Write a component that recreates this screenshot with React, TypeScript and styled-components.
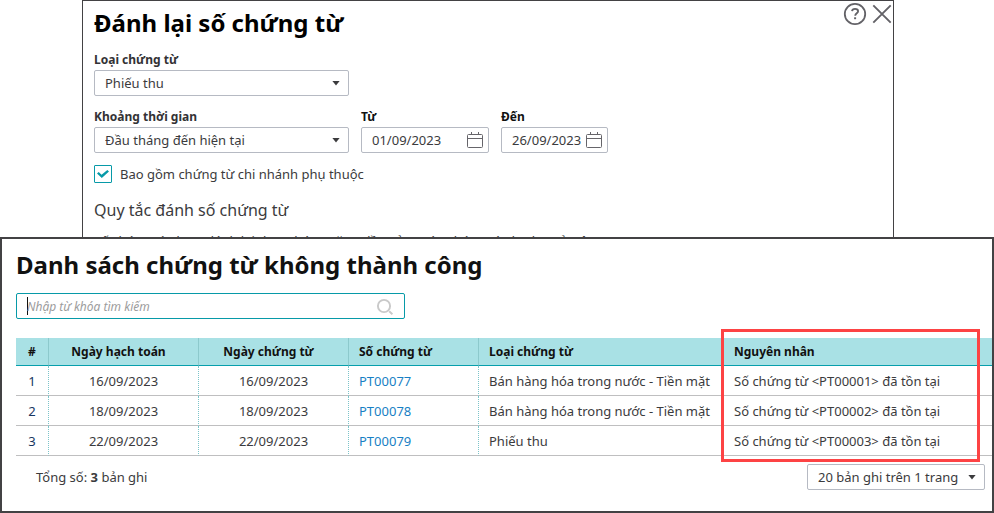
import React, { useState } from "react";
import styled, { createGlobalStyle } from "styled-components";

const GlobalStyle = createGlobalStyle`
  *, *::before, *::after { box-sizing: border-box; }
  body { margin: 0; background: #fff; }
  body, button, input, select {
    font-family: "Noto Sans", sans-serif;
    font-size: 13px;
    line-height: 18px;
    color: #3b3b3d;
  }
`;

const Page = styled.main`
  display: flex;
  flex-direction: column;
`;

const SettingsDialog = styled.section`
  position: relative;
  max-height: 237px;
  margin: 0 100px 0 82px;
  padding: 4px 11px 0;
  overflow: hidden;
  border: 1px solid #434244;
  border-bottom: 0;
`;

const ResultDialog = styled.section`
  display: flex;
  flex-direction: column;
  min-height: 276px;
  padding: 8px 0 21px 14px;
  border: 2px solid #434244;
`;

const DialogHeader = styled.header`
  display: flex;
  justify-content: space-between;
  align-items: flex-start;
`;

const Title = styled.h1<{ $tone?: string }>`
  margin: 0;
  font-size: 24px;
  line-height: 36px;
  font-weight: 700;
  color: ${(p) => p.$tone || "#000"};
`;

const Tools = styled.div`
  display: flex;
  gap: 3px;
  margin: -4px -12px 0 0;
`;

const IconButton = styled.button`
  display: flex;
  padding: 1px 0;
  border: 0;
  background: none;
  color: #636267;
`;

const FieldRow = styled.div`
  display: flex;
  gap: 12px;
  margin-top: 10px;
  & + & { margin-top: 12px; }
`;

const Field = styled.div<{ $width: number }>`
  display: flex;
  flex-direction: column;
  width: ${(p) => p.$width}px;
`;

const Label = styled.label<{ $dark?: boolean }>`
  margin-bottom: 1px;
  font-size: 12px;
  font-weight: 700;
  color: ${(p) => (p.$dark ? "#111" : "#333235")};
`;

const ControlBox = styled.div<{ $active?: boolean }>`
  display: flex;
  align-items: center;
  height: 26px;
  padding: 0 0 0 10px;
  border: 1px solid ${(p) => (p.$active ? "#079aa8" : "#b6bac3")};
  border-radius: 2px;
  background: #fff;
`;

const Select = styled.select`
  appearance: none;
  flex: 1;
  min-width: 0;
  height: 24px;
  padding: 0;
  border: 0;
  outline: 0;
  background: none;
`;

const DateInput = styled.input`
  flex: 1;
  min-width: 0;
  height: 24px;
  padding: 0;
  border: 0;
  outline: 0;
  background: none;
`;

const SearchInput = styled(DateInput)`
  font-size: 12px;
  font-style: italic;
  &::placeholder { color: #9c9c9c; opacity: 1; }
`;

const Caret = styled.span`
  width: 1px;
  height: 18px;
  margin-right: -1px;
  background: #111;
`;

const Chevron = styled.span`
  flex: none;
  width: 8px;
  height: 5px;
  margin: 0 8px;
  background: #3b3b3d;
  clip-path: polygon(0 0, 100% 0, 50% 100%);
  pointer-events: none;
`;

const IconSlot = styled.span<{ $inset: number }>`
  display: flex;
  flex: none;
  margin-right: ${(p) => p.$inset}px;
`;

const CheckLabel = styled.label`
  display: flex;
  align-items: center;
  gap: 8px;
  margin-top: 12px;
`;

const CheckBox = styled.input`
  appearance: none;
  width: 18px;
  height: 18px;
  margin: 0;
  border: 1px solid #079aa8;
  border-radius: 1px;
  display: grid;
  place-items: center;
  &:checked::before {
    content: "";
    width: 12px;
    height: 8px;
    background: #079aa8;
    clip-path: polygon(0 44%, 14% 25%, 38% 60%, 86% 0, 100% 18%, 40% 100%);
  }
`;

const SubTitle = styled.h2`
  margin: 15px 0 0;
  font-size: 16px;
  line-height: 24px;
  font-weight: 400;
`;

const Rule = styled.p`
  margin: 10px 0 0;
`;

const SearchField = styled.div`
  width: 389px;
  max-width: 100%;
  margin-top: 10px;
`;

const TableArea = styled.div`
  position: relative;
  margin-top: 19px;
`;

const Table = styled.table`
  width: 100%;
  table-layout: fixed;
  border-collapse: separate;
  border-spacing: 0;
`;

const Col = styled.col<{ $width?: number }>`
  width: ${(p) => (p.$width ? `${p.$width}px` : "auto")};
`;

type CellProps = { $align?: "left" | "center"; $last?: boolean; $sortable?: boolean };

const HeadCell = styled.th<CellProps>`
  height: 28px;
  padding: 0 ${(p) => (p.$sortable ? 10 : 0)}px 0 ${(p) => (p.$align === "center" ? 0 : 10)}px;
  font-size: 12px;
  font-weight: 700;
  text-align: ${(p) => p.$align || "left"};
  white-space: nowrap;
  color: #111;
  background: #a9e1e5;
  border-right: ${(p) => (p.$last ? 0 : 1)}px solid #8cc9cc;
  border-bottom: 1px solid #079fac;
`;

const Cell = styled.td<CellProps>`
  height: 30px;
  padding: 0 0 0 ${(p) => (p.$align === "center" ? 0 : 10)}px;
  text-align: ${(p) => p.$align || "left"};
  white-space: nowrap;
  border-right: ${(p) => (p.$last ? 0 : 1)}px dotted #7cc4c9;
  border-bottom: 1px solid #bfbfc0;
`;

const IndexCell = styled(Cell)`
  color: #17365f;
`;

const VoucherLink = styled.a`
  color: #187fc4;
  text-decoration: none;
`;

const Highlight = styled.div`
  position: absolute;
  top: -9px;
  bottom: -6px;
  left: 705px;
  width: 259px;
  border: 3px solid #fd4344;
  pointer-events: none;
`;

const Footer = styled.footer`
  display: flex;
  justify-content: space-between;
  align-items: center;
  margin-top: 8px;
  padding: 0 7px 0 20px;
`;

const PageSize = styled.div`
  width: 178px;
`;

const HelpIcon = () => (
  <svg width="24" height="24" viewBox="0 0 24 24" fill="none" stroke="currentColor" aria-hidden="true">
    <circle cx="12" cy="12" r="10.2" strokeWidth="1.8" />
    <path d="M9 9.2C9.2 7.6 10.4 6.9 12 6.9C13.8 6.9 15.1 7.8 15.1 9.3C15.1 11.3 12.2 11.4 12.2 13.8" strokeWidth="1.8" />
    <path d="M12.1 15.3V17.2" strokeWidth="2" />
  </svg>
);

const CloseIcon = () => (
  <svg width="24" height="24" viewBox="0 0 24 24" fill="none" stroke="currentColor" strokeWidth="1.9" aria-hidden="true">
    <path d="M3.3 3.3L20.7 20.7M20.7 3.3L3.3 20.7" />
  </svg>
);

const CalendarIcon = () => (
  <svg width="18" height="18" viewBox="0 0 18 18" fill="none" stroke="#66656a" aria-hidden="true">
    <rect x="1.5" y="3.5" width="15" height="13" rx="1" />
    <path d="M1.5 7.5H16.5M5.5 1V4M12.5 1V4" />
  </svg>
);

const SearchIcon = () => (
  <svg width="18" height="18" viewBox="0 0 18 18" fill="none" stroke="#c9c9c9" aria-hidden="true">
    <circle cx="8" cy="9" r="6.1" strokeWidth="1.9" />
    <path d="M13.2 14.2L16.4 17.2" strokeWidth="1.9" />
  </svg>
);

const SelectBox = ({ id, options, label }: { id: string; options: string[]; label?: string }) => (
  <ControlBox>
    <Select id={id} aria-label={label}>
      {options.map((o) => (
        <option key={o}>{o}</option>
      ))}
    </Select>
    <Chevron />
  </ControlBox>
);

const DateField = ({ id, label, value, width }: { id: string; label: string; value: string; width: number }) => (
  <Field $width={width}>
    <Label htmlFor={id} $dark>{label}</Label>
    <ControlBox>
      <DateInput id={id} defaultValue={value} />
      <IconSlot $inset={4}><CalendarIcon /></IconSlot>
    </ControlBox>
  </Field>
);

const rows = [
  { date: "16/09/2023", no: "PT00077", type: "Bán hàng hóa trong nước - Tiền mặt", reason: "Số chứng từ <PT00001> đã tồn tại" },
  { date: "18/09/2023", no: "PT00078", type: "Bán hàng hóa trong nước - Tiền mặt", reason: "Số chứng từ <PT00002> đã tồn tại" },
  { date: "22/09/2023", no: "PT00079", type: "Phiếu thu", reason: "Số chứng từ <PT00003> đã tồn tại" },
];

export default function App() {
  const [branches, setBranches] = useState(true);
  return (
    <>
      <GlobalStyle />
      <Page>
        <SettingsDialog>
          <DialogHeader>
            <Title>Đánh lại số chứng từ</Title>
            <Tools>
              <IconButton aria-label="Trợ giúp"><HelpIcon /></IconButton>
              <IconButton aria-label="Đóng"><CloseIcon /></IconButton>
            </Tools>
          </DialogHeader>
          <FieldRow>
            <Field $width={255}>
              <Label htmlFor="type">Loại chứng từ</Label>
              <SelectBox id="type" options={["Phiếu thu"]} />
            </Field>
          </FieldRow>
          <FieldRow>
            <Field $width={255}>
              <Label htmlFor="period">Khoảng thời gian</Label>
              <SelectBox id="period" options={["Đầu tháng đến hiện tại"]} />
            </Field>
            <DateField id="from" label="Từ" value="01/09/2023" width={128} />
            <DateField id="to" label="Đến" value="26/09/2023" width={107} />
          </FieldRow>
          <CheckLabel>
            <CheckBox type="checkbox" checked={branches} onChange={(e) => setBranches(e.target.checked)} />
            Bao gồm chứng từ chi nhánh phụ thuộc
          </CheckLabel>
          <SubTitle>Quy tắc đánh số chứng từ</SubTitle>
          <Rule>Số chứng từ được đánh lại theo thứ tự tăng dần của ngày chứng từ đã chọn ở trên</Rule>
        </SettingsDialog>

        <ResultDialog>
          <Title as="h2" $tone="#111">Danh sách chứng từ không thành công</Title>
          <SearchField>
            <ControlBox $active>
              <Caret />
              <SearchInput aria-label="Tìm kiếm" placeholder="Nhập từ khóa tìm kiếm" />
              <IconSlot $inset={10}><SearchIcon /></IconSlot>
            </ControlBox>
          </SearchField>
          <TableArea>
            <Table>
              <colgroup>
                <Col $width={33} />
                <Col $width={150} />
                <Col $width={150} />
                <Col $width={130} />
                <Col $width={245} />
                <Col />
              </colgroup>
              <thead>
                <tr>
                  <HeadCell $align="center">#</HeadCell>
                  <HeadCell $align="center" $sortable>Ngày hạch toán</HeadCell>
                  <HeadCell $align="center" $sortable>Ngày chứng từ</HeadCell>
                  <HeadCell>Số chứng từ</HeadCell>
                  <HeadCell>Loại chứng từ</HeadCell>
                  <HeadCell $last>Nguyên nhân</HeadCell>
                </tr>
              </thead>
              <tbody>
                {rows.map((r, i) => (
                  <tr key={r.no}>
                    <IndexCell $align="center">{i + 1}</IndexCell>
                    <Cell $align="center">{r.date}</Cell>
                    <Cell $align="center">{r.date}</Cell>
                    <Cell><VoucherLink href="#">{r.no}</VoucherLink></Cell>
                    <Cell>{r.type}</Cell>
                    <Cell $last>{r.reason}</Cell>
                  </tr>
                ))}
              </tbody>
            </Table>
            <Highlight />
          </TableArea>
          <Footer>
            <span>Tổng số: <b>3</b> bản ghi</span>
            <PageSize>
              <SelectBox id="page-size" label="Số bản ghi trên trang" options={["20 bản ghi trên 1 trang"]} />
            </PageSize>
          </Footer>
        </ResultDialog>
      </Page>
    </>
  );
}
